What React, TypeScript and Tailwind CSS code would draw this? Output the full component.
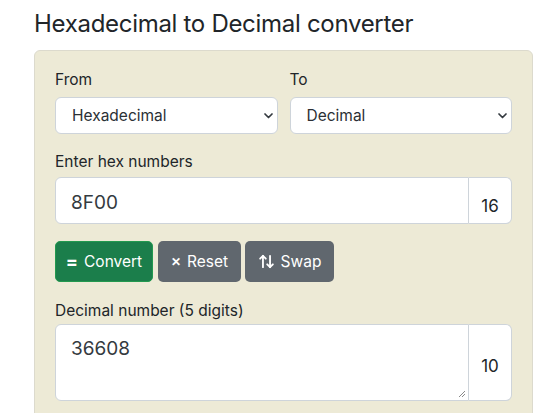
import { ArrowUpDown } from 'lucide-react';

export default function App() {
  return (
    <div className="w-[549px] h-[413px] overflow-hidden bg-white pl-[34px] text-[#212529] font-['Inter',sans-serif]">
      <h2 className="pt-[9px] h-[50px] text-[24px] leading-[30px] font-normal tracking-[-0.3px]">
        Hexadecimal to Decimal converter
      </h2>
      <div className="w-[499px] h-[400px] bg-[#edead6] border border-[#dcdacd] rounded-[6px] px-[20px] pt-[18px]">
        <div className="grid grid-cols-2 gap-[12px]">
          <div>
            <label className="block h-[22px] text-[15.5px] leading-[22px] mb-[6px]">From</label>
            <div className="relative h-[37px] bg-white border border-[#ced4da] rounded-[6px] flex items-center pl-[16px] text-[15.5px] text-[#2b3035]">
              Hexadecimal
              <Chevron />
            </div>
          </div>
          <div>
            <label className="block h-[22px] text-[15.5px] leading-[22px] mb-[6px]">To</label>
            <div className="relative h-[37px] bg-white border border-[#ced4da] rounded-[6px] flex items-center pl-[16px] text-[15.5px] text-[#2b3035]">
              Decimal
              <Chevron />
            </div>
          </div>
        </div>

        <label className="block h-[22px] text-[15.5px] leading-[22px] mt-[17px] mb-[4px]">Enter hex numbers</label>
        <div className="flex h-[47px]">
          <div className="flex-1 bg-white border border-[#ced4da] rounded-l-[6px] pl-[15px] pt-[13px] text-[19px] leading-[24px] text-[#343a40]">
            8F00
          </div>
          <div className="w-[43px] bg-white border border-l-0 border-[#ced4da] rounded-r-[6px] text-center pt-[18px] text-[17px] leading-[20px]">
            16
          </div>
        </div>

        <div className="flex gap-[4px] mt-[17px]">
          <button className="h-[41px] w-[98px] bg-[#1b7e4b] border border-[#22994f] text-white rounded-[5px] text-[15.5px] flex items-center justify-center gap-[6px]">
            <span className="text-[18px] font-bold leading-none">=</span>Convert
          </button>
          <button className="h-[41px] w-[83px] ml-[1px] bg-[#60676e] text-white rounded-[5px] text-[15.5px] flex items-center justify-center gap-[6px]">
            <span className="text-[12px] font-black leading-none">✕</span>Reset
          </button>
          <button className="h-[41px] w-[89px] bg-[#60676e] text-white rounded-[5px] text-[15.5px] flex items-center justify-center gap-[6px]">
            <ArrowUpDown className="w-[17px] h-[17px]" strokeWidth={2.6} />Swap
          </button>
        </div>

        <label className="block h-[22px] text-[15.5px] leading-[22px] mt-[18px] mb-[2px]">Decimal number (5 digits)</label>
        <div className="flex h-[77px]">
          <div className="relative flex-1 bg-white border border-[#ced4da] rounded-l-[6px] pl-[15px] pt-[12px] text-[19px] leading-[24px] text-[#343a40]">
            36608
            <svg className="absolute right-[2px] bottom-[2px]" width="8" height="8" viewBox="0 0 8 8">
              <path d="M7 1L1 7M7 4L4 7" stroke="#8a8a8a" strokeWidth="1" />
            </svg>
          </div>
          <div className="w-[43px] bg-white border border-l-0 border-[#ced4da] rounded-r-[6px] text-center pt-[31px] text-[17px] leading-[20px]">
            10
          </div>
        </div>
      </div>
    </div>
  );
}

function Chevron() {
  return (
    <svg className="absolute right-[4px] top-[15px]" width="9" height="6" viewBox="0 0 9 6">
      <path d="M1 1l3.5 3.5L8 1" fill="none" stroke="#343a40" strokeWidth="1.7" strokeLinecap="round" strokeLinejoin="round" />
    </svg>
  );
}
